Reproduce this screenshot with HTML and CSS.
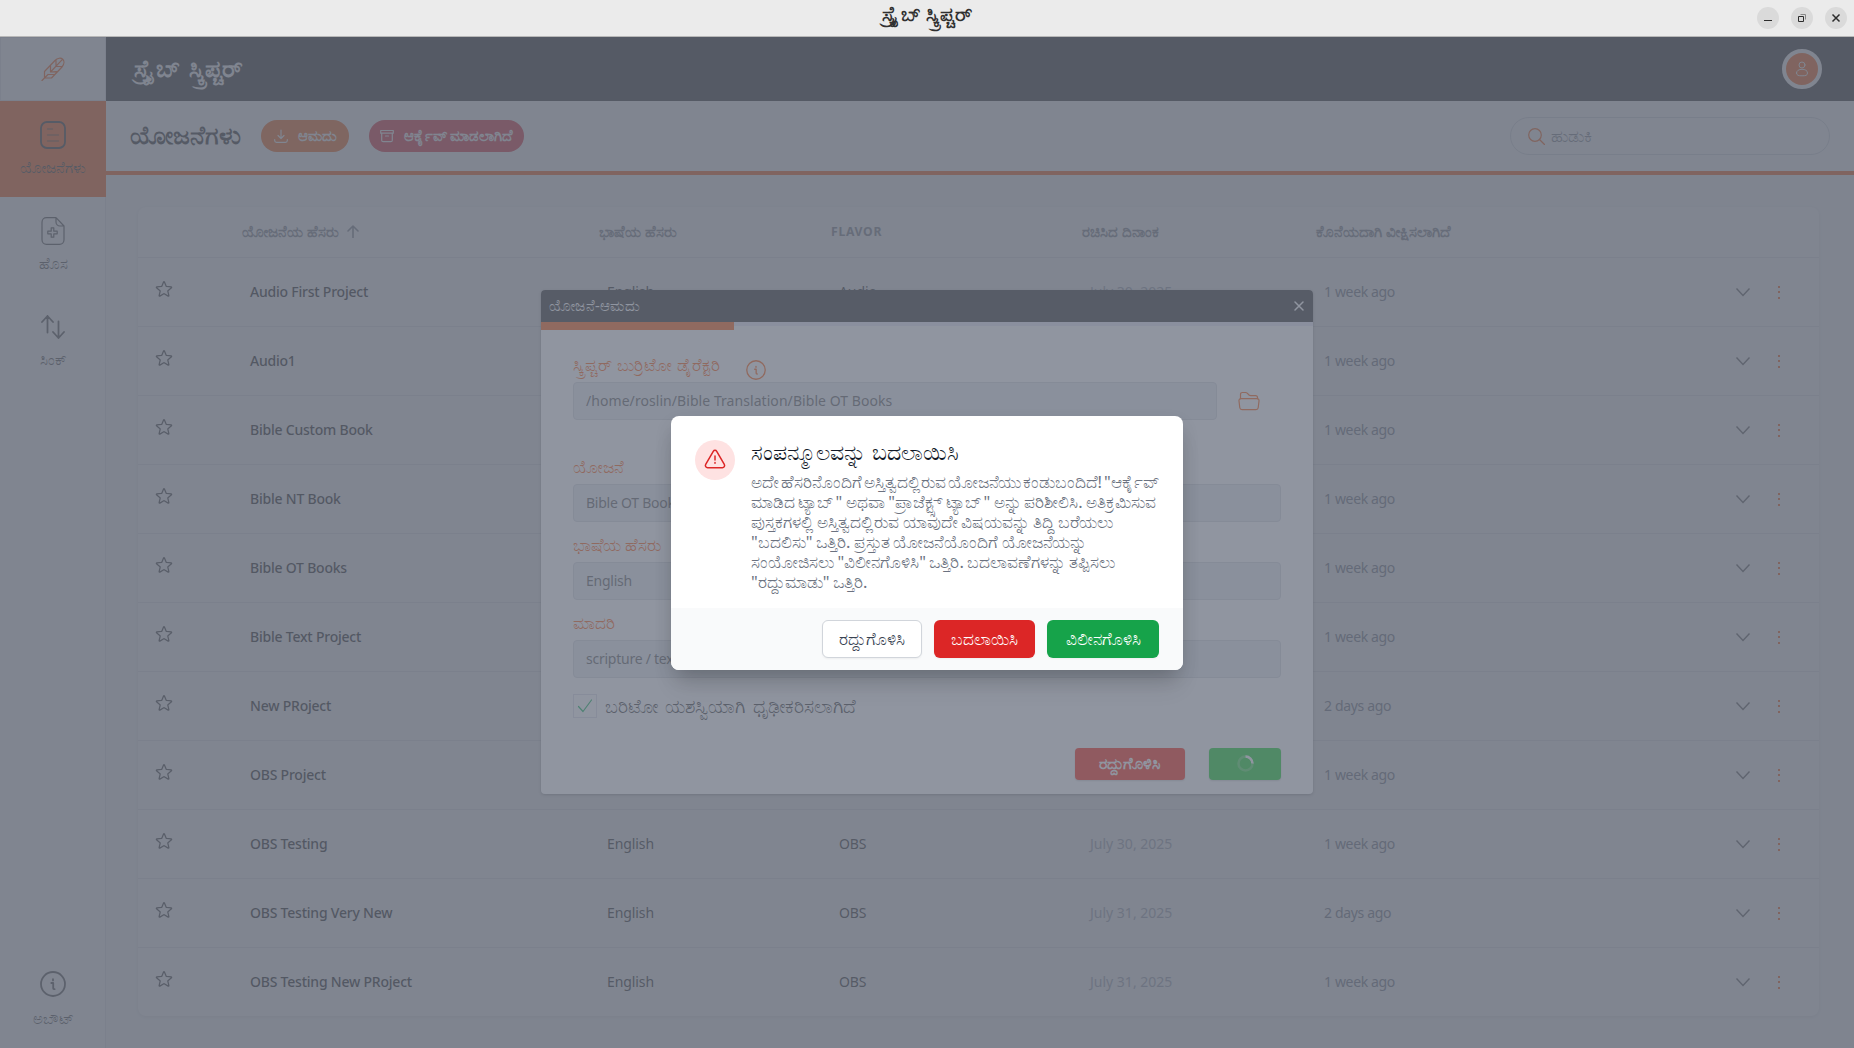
FILE: index.html
```html
<!DOCTYPE html>
<html lang="kn">
<head>
<meta charset="utf-8">
<title>ಸ್ಕ್ರೈಬ್ ಸ್ಕ್ರಿಪ್ಚರ್</title>
<link rel="stylesheet" href="styles.css">
</head>
<body>
<svg width="0" height="0" class="defs">
  <symbol id="star" viewBox="0 0 24 24"><path d="M11.48 3.5a.56.56 0 0 1 1.04 0l2.12 5.11a.56.56 0 0 0 .48.35l5.52.44c.5.04.7.66.32.99l-4.2 3.6a.56.56 0 0 0-.19.56l1.29 5.38a.56.56 0 0 1-.84.61l-4.73-2.88a.56.56 0 0 0-.58 0l-4.73 2.88a.56.56 0 0 1-.84-.61l1.29-5.38a.56.56 0 0 0-.19-.56l-4.2-3.6a.56.56 0 0 1 .32-.99l5.52-.44a.56.56 0 0 0 .48-.35z"/></symbol>
  <symbol id="chev" viewBox="0 0 20 20"><path d="M3.500 6.500 10 13.500l6.500-7"/></symbol>
  <symbol id="dots" viewBox="0 0 20 20"><path d="M9 4h2v2H9zM9 9h2v2H9zM9 15h2v2H9z"/></symbol>
  <symbol id="info" viewBox="0 0 26 26"><circle cx="13" cy="13" r="12"/><path d="M11.300 12h1.900v5.200c0 .8.4 1 1.400 1M13 8.200v1.200"/></symbol>
  <symbol id="xmark" viewBox="0 0 12 12"><path d="m2 2 8 8M10 2l-8 8"/></symbol>
</svg>

<div class="titlebar">
  <span class="win-title">ಸ್ಕ್ರೈಬ್ ಸ್ಕ್ರಿಪ್ಚರ್</span>
  <div class="win-controls">
    <span class="win-btn"><svg viewBox="0 0 22 22"><path d="M7 13.500h8"/></svg></span>
    <span class="win-btn"><svg viewBox="0 0 22 22"><path d="M7.500 9.500h5v5h-5z"/><path class="faint" d="M9.500 7.500h5v5"/></svg></span>
    <span class="win-btn"><svg viewBox="0 0 22 22"><path stroke-width="1.500" d="m7.500 7.500 7 7M14.500 7.500l-7 7"/></svg></span>
  </div>
</div>

<div class="app">
  <nav class="sidebar">
    <div class="logo"><svg class="line" width="24" height="24" viewBox="0 0 24 24"><path d="M1 23.500 7 17.500M3.500 21V14.500L14 3.500C16.500.8 20 .6 21.700 2.200S23.500 7 21 10L10.500 21H3.500M9.500 8.500V15L21.700 2.200M15 3v6M7 17.500h6.500M9.500 15l6-.3M15 9.500h6"/></svg></div>
    <a class="nav on"><svg class="line bold" width="26" height="28" viewBox="0 0 26 28"><rect x="1" y="1" width="24" height="26" rx="6"/><path class="thin" d="M7.500 8h5M7.500 14h11M7.500 20h11"/></svg><span>ಯೋಜನೆಗಳು</span></a>
    <a class="nav"><svg class="line" width="24" height="28" viewBox="0 0 24 28"><path d="M15 .7H5.500A4.500 4.500 0 0 0 1 5.200v17.600a4.500 4.500 0 0 0 4.500 4.500h13a4.500 4.500 0 0 0 4.500-4.500V9zM15 .7V5a4 4 0 0 0 4 4h4"/><path d="M10.200 10.800h2.600v3.400h3.400v2.600h-3.400v3.400h-2.600v-3.400H6.800v-2.600h3.400z"/></svg><span>ಹೊಸ</span></a>
    <a class="nav"><svg class="line bold" width="24" height="26" viewBox="0 0 24 26"><path d="M6.500 18.500V2M1 8l5.500-6L12 8M17.500 7.500V24M12 18l5.500 6 5.500-6"/></svg><span>ಸಿಂಕ್</span></a>
    <a class="nav last"><svg class="line bold" width="26" height="26"><use href="#info"/></svg><span>ಅಬೌಟ್</span></a>
  </nav>

  <main class="main">
    <header class="top"><h1>ಸ್ಕ್ರೈಬ್ ಸ್ಕ್ರಿಪ್ಚರ್</h1>
      <div class="avatar"><svg class="line" width="14" height="16" viewBox="0 0 14 16"><circle cx="7" cy="4" r="3"/><path d="M1.500 12c0-2.500 2.500-3.700 5.500-3.700s5.500 1.200 5.500 3.700-2 2.800-5.500 2.800-5.500-.3-5.500-2.800z"/></svg></div>
    </header>
    <div class="toolbar">
      <h2>ಯೋಜನೆಗಳು</h2>
      <button class="pill import"><svg class="line" width="14" height="14" viewBox="0 0 14 14"><path d="M7 1v8M4 6.500 7 9.500l3-3M.7 10.500v1q0 1.800 1.800 1.800h9q1.800 0 1.800-1.800v-1"/></svg><span>ಆಮದು</span></button>
      <button class="pill archive"><svg class="line" width="14" height="14" viewBox="0 0 14 14"><path d="M.7 1.500h12.600v2.700H.7zM1.700 4.200v7q0 1.500 1.500 1.500h7.600q1.500 0 1.500-1.500v-7M5.500 7h3"/></svg><span>ಆರ್ಕೈವ್ ಮಾಡಲಾಗಿದೆ</span></button>
      <div class="search"><svg class="line" width="17" height="17" viewBox="0 0 17 17"><circle cx="7" cy="7" r="6.300"/><path d="m11.500 11.500 5 5"/></svg><span>ಹುಡುಕಿ</span></div>
    </div>
    <div class="content">
      <div class="table">
        <div class="row head"><span></span><span class="sort"><b>ಯೋಜನೆಯ ಹೆಸರು</b><svg class="line" width="12" height="13" viewBox="0 0 12 13"><path d="M6 12.500V1M1 6l5-5 5 5"/></svg></span><span>ಭಾಷೆಯ ಹೆಸರು</span><span class="flav">FLAVOR</span><span>ರಚಿಸಿದ ದಿನಾಂಕ</span><span class="viewed">ಕೊನೆಯದಾಗಿ ವೀಕ್ಷಿಸಲಾಗಿದೆ</span></div>
        <div class="row"><svg class="star"><use href="#star"/></svg><span class="name">Audio First Project</span><span class="lang">English</span><span class="lang">Audio</span><span class="date">July 30, 2025</span><span class="ago">1 week ago</span><svg class="chev"><use href="#chev"/></svg><svg class="dots"><use href="#dots"/></svg></div>
        <div class="row"><svg class="star"><use href="#star"/></svg><span class="name">Audio1</span><span></span><span></span><span></span><span class="ago">1 week ago</span><svg class="chev"><use href="#chev"/></svg><svg class="dots"><use href="#dots"/></svg></div>
        <div class="row"><svg class="star"><use href="#star"/></svg><span class="name">Bible Custom Book</span><span></span><span></span><span></span><span class="ago">1 week ago</span><svg class="chev"><use href="#chev"/></svg><svg class="dots"><use href="#dots"/></svg></div>
        <div class="row"><svg class="star"><use href="#star"/></svg><span class="name">Bible NT Book</span><span></span><span></span><span></span><span class="ago">1 week ago</span><svg class="chev"><use href="#chev"/></svg><svg class="dots"><use href="#dots"/></svg></div>
        <div class="row"><svg class="star"><use href="#star"/></svg><span class="name">Bible OT Books</span><span></span><span></span><span></span><span class="ago">1 week ago</span><svg class="chev"><use href="#chev"/></svg><svg class="dots"><use href="#dots"/></svg></div>
        <div class="row"><svg class="star"><use href="#star"/></svg><span class="name">Bible Text Project</span><span></span><span></span><span></span><span class="ago">1 week ago</span><svg class="chev"><use href="#chev"/></svg><svg class="dots"><use href="#dots"/></svg></div>
        <div class="row"><svg class="star"><use href="#star"/></svg><span class="name">New PRoject</span><span></span><span></span><span></span><span class="ago">2 days ago</span><svg class="chev"><use href="#chev"/></svg><svg class="dots"><use href="#dots"/></svg></div>
        <div class="row"><svg class="star"><use href="#star"/></svg><span class="name">OBS Project</span><span></span><span></span><span></span><span class="ago">1 week ago</span><svg class="chev"><use href="#chev"/></svg><svg class="dots"><use href="#dots"/></svg></div>
        <div class="row"><svg class="star"><use href="#star"/></svg><span class="name">OBS Testing</span><span class="lang">English</span><span class="lang">OBS</span><span class="date">July 30, 2025</span><span class="ago">1 week ago</span><svg class="chev"><use href="#chev"/></svg><svg class="dots"><use href="#dots"/></svg></div>
        <div class="row"><svg class="star"><use href="#star"/></svg><span class="name">OBS Testing Very New</span><span class="lang">English</span><span class="lang">OBS</span><span class="date">July 31, 2025</span><span class="ago">2 days ago</span><svg class="chev"><use href="#chev"/></svg><svg class="dots"><use href="#dots"/></svg></div>
        <div class="row"><svg class="star"><use href="#star"/></svg><span class="name">OBS Testing New PRoject</span><span class="lang">English</span><span class="lang">OBS</span><span class="date">July 31, 2025</span><span class="ago">1 week ago</span><svg class="chev"><use href="#chev"/></svg><svg class="dots"><use href="#dots"/></svg></div>
      </div>
    </div>
  </main>
</div>

<div class="layer shade">
  <section class="modal">
    <div class="modal-head"><span>ಯೋಜನೆ-ಆಮದು</span><svg class="line" width="12" height="12"><use href="#xmark"/></svg></div>
    <div class="progress"><i></i></div>
    <div class="form">
      <label class="first"><span>ಸ್ಕ್ರಿಪ್ಚರ್ ಬುರ್ರಿಟೋ ಡೈರೆಕ್ಟರಿ</span><svg class="line" width="20" height="20"><use href="#info"/></svg></label>
      <div class="pick"><div class="input path">/home/roslin/Bible Translation/Bible OT Books</div><svg class="line" width="22" height="20" viewBox="0 0 22 20"><path d="M2.500 8V3.500Q2.500 1.500 4.500 1.500H7.500Q8.500 1.500 9.200 2.200L11 4Q11.700 4.600 12.700 4.600H17.500Q19.500 4.600 19.500 6.500V8M3 7.700H19Q21.300 7.700 21 10L20.200 16.800Q20 18.700 18 18.700H4Q2 18.700 1.800 16.800L1 10Q.7 7.700 3 7.700Z"/></svg></div>
      <label class="proj"><span>ಯೋಜನೆ</span></label>
      <div class="input">Bible OT Books</div>
      <label><span>ಭಾಷೆಯ ಹೆಸರು</span></label>
      <div class="input">English</div>
      <label><span>ಮಾದರಿ</span></label>
      <div class="input">scripture / textTranslation</div>
      <div class="valid"><i><svg class="line" width="18" height="18" viewBox="0 0 18 18"><path d="m2.500 9.500 4.500 5L15.500 3"/></svg></i><span>ಬರಿಟೋ ಯಶಸ್ವಿಯಾಗಿ ಧೃಢೀಕರಿಸಲಾಗಿದೆ</span></div>
      <div class="actions"><button class="cancel">ರದ್ದುಗೊಳಿಸಿ</button><button class="go"><svg width="17" height="17" viewBox="0 0 17 17"><circle cx="8.500" cy="8.500" r="7"/><path d="M8.500 1.500a7 7 0 0 1 7 7"/></svg></button></div>
    </div>
  </section>
</div>

<div class="layer veil">
  <section class="alert">
    <div class="alert-body">
      <div class="badge"><svg class="line" width="24" height="24" viewBox="0 0 24 24"><path d="M12 9v4m0 2.500v.8M10.270 4.300 2.700 17.400c-.88 1.500.2 3.350 1.940 3.350h14.720c1.730 0 2.810-1.870 1.940-3.350L13.730 4.300a2 2 0 0 0-3.460 0z"/></svg></div>
      <div class="msg">
        <h3>ಸಂಪನ್ಮೂಲವನ್ನು ಬದಲಾಯಿಸಿ</h3>
        <p><span class="tight">ಅದೇ ಹೆಸರಿನೊಂದಿಗೆ ಅಸ್ತಿತ್ವದಲ್ಲಿರುವ ಯೋಜನೆಯು ಕಂಡುಬಂದಿದೆ! "ಆರ್ಕೈವ್</span><br>ಮಾಡಿದ ಟ್ಯಾಬ್" ಅಥವಾ "ಪ್ರಾಜೆಕ್ಟ್ಸ್ ಟ್ಯಾಬ್" ಅನ್ನು ಪರಿಶೀಲಿಸಿ. ಅತಿಕ್ರಮಿಸುವ<br>ಪುಸ್ತಕಗಳಲ್ಲಿ ಅಸ್ತಿತ್ವದಲ್ಲಿರುವ ಯಾವುದೇ ವಿಷಯವನ್ನು ತಿದ್ದಿ ಬರೆಯಲು<br>"ಬದಲಿಸು" ಒತ್ತಿರಿ. ಪ್ರಸ್ತುತ ಯೋಜನೆಯೊಂದಿಗೆ ಯೋಜನೆಯನ್ನು<br>ಸಂಯೋಜಿಸಲು "ವಿಲೀನಗೊಳಿಸಿ" ಒತ್ತಿರಿ. ಬದಲಾವಣೆಗಳನ್ನು ತಪ್ಪಿಸಲು<br>"ರದ್ದುಮಾಡು" ಒತ್ತಿರಿ.</p>
      </div>
    </div>
    <div class="alert-foot"><button class="b-cancel">ರದ್ದುಗೊಳಿಸಿ</button><button class="b-replace">ಬದಲಾಯಿಸಿ</button><button class="b-merge">ವಿಲೀನಗೊಳಿಸಿ</button></div>
  </section>
</div>
</body>
</html>
```
FILE: styles.css
```css
* { box-sizing: border-box; }
body { margin: 0; width: 1854px; height: 1048px; overflow: hidden; background: #fff; font: 14px/20px "Noto Sans", "Open Sans", sans-serif; color: #333; }
h1, h2, h3, p { margin: 0; }
button { font: inherit; border: 0; padding: 0; white-space: nowrap; }
span, label { white-space: nowrap; }
.defs { position: absolute; }
.line { fill: none; stroke: currentColor; stroke-width: 1.2; stroke-linecap: round; stroke-linejoin: round; flex: none; }
.line.bold { stroke-width: 1.8; }
.thin { stroke-width: 1.4; }

.titlebar { display: grid; grid-template-columns: 1fr auto 1fr; align-items: center; height: 37px; background: #ebebeb; border-bottom: 1px solid #b8b8b8; }
.win-title { grid-column: 2; font-weight: 700; font-size: 19.8px; color: #303030; padding-bottom: 8px; }
.win-controls { display: flex; justify-content: flex-end; gap: 12px; padding-right: 7px; }
.win-btn { width: 22px; height: 22px; border-radius: 50%; background: #dadada; }
.win-btn svg { display: block; fill: none; stroke: #2c2c2c; stroke-width: 1; }
.faint { stroke: #888; }

.app { display: flex; height: 1011px; }
.sidebar { display: flex; flex-direction: column; width: 106px; border-right: 1px solid #e5e7eb; }
.logo { display: grid; place-items: center; height: 64px; color: #f50; border: 1px solid #e5e7eb; border-width: 1px 0 1px 1px; }
.nav { display: flex; flex-direction: column; align-items: center; height: 96px; width: 106px; padding-top: 20px; font-size: 15.4px; color: #444; }
.nav svg { height: 28px; }
.nav span { margin-top: 9px; }
.nav.on { background: #f50; color: #222; }
.nav.on .thin { stroke: #222; opacity: .5; }
.nav.last { margin-top: auto; padding-top: 18px; }
.nav.last span { margin-top: 11px; }

.main { flex: 1; display: flex; flex-direction: column; }
.top { flex: none; display: flex; align-items: center; justify-content: space-between; height: 64px; background: #1f1f1f; padding: 0 32px 0 28px; }
.top h1 { font-size: 24.3px; line-height: 28px; padding-bottom: 3px; color: #fff; word-spacing: 3px; }
.avatar { display: grid; place-items: center; width: 40px; height: 40px; border: 4px solid #fff; border-radius: 50%; background: #f50; color: #fff; }
.avatar svg { stroke-width: 1; }
.toolbar { flex: none; display: flex; align-items: center; height: 74px; border-bottom: 4px solid #f50; padding: 0 24px; }
.toolbar h2 { font-size: 25px; line-height: 28px; width: 131px; padding-bottom: 4px; color: #1f1f1f; white-space: nowrap; }
.pill { display: flex; align-items: center; justify-content: center; gap: 10px; height: 32px; border-radius: 16px; color: #fff; font-size: 14.8px; font-weight: 700; word-spacing: -2px; }
.pill span { padding-bottom: 2px; }
.import { width: 88px; background: #f95a06; }
.archive { width: 155px; margin-left: 20px; background: #df1c2e; }
.search { display: flex; align-items: center; gap: 6px; width: 320px; height: 38px; margin-left: auto; padding-left: 17px; border: 1px solid #d6dae0; border-radius: 19px; color: #f50; }
.search span { color: #777c85; font-size: 17.3px; padding-bottom: 1px; }

.content { flex: none; height: 873px; background: #fafbfc; padding: 32px 35px 31px 32px; }
.table { background: #fff; border-radius: 8px; box-shadow: 0 1px 4px #0000001c; }
.row { display: grid; grid-template-columns: 112px 357px 232px 251px 234px 409px 36px 1fr; align-items: center; height: 69px; border-bottom: 1px solid #e5e7eb; }
.row:last-child { border: 0; height: 68px; }
.head { height: 51px; font-size: 14.6px; font-weight: 700; color: #777c85; }
.head > span { margin-left: -8px; padding-bottom: 2px; }
.sort { display: flex; align-items: center; gap: 8px; }
.sort svg { stroke-width: 1.6; }
.head .viewed { font-size: 15px; }
.head .flav { letter-spacing: .7px; font-size: 12.2px; padding: 0; }
.star { width: 20px; height: 20px; margin: -6px 0 0 16px; fill: none; stroke: #333; stroke-width: 1.5; }
.name { font-weight: 500; color: #111; letter-spacing: -.22px; }
.lang { color: #222; letter-spacing: -.1px; }
.date { color: #9ca3af; }
.ago { color: #6b7280; letter-spacing: -.35px; }
.chev { width: 20px; height: 20px; fill: none; stroke: #555; stroke-width: 1.4; }
.dots { width: 20px; height: 20px; fill: #f50; }

.layer { position: absolute; inset: 37px 0 0; }
.shade { background: #00000040; padding: 253px 0 0 541px; }
.modal { width: 772px; height: 504px; border-radius: 4px; background: #fff; box-shadow: 0 1px 3px #0005; overflow: hidden; }
.modal-head { display: flex; justify-content: space-between; align-items: center; height: 32px; padding: 0 8px; background: #1f1f1f; color: #fff; font-size: 14.8px; letter-spacing: .3px; }
.modal-head span { padding-bottom: 2px; }
.modal-head svg { stroke-width: 1.5; }
.progress { height: 8px; background: linear-gradient(#e5e7f5 50%, #fff 50%); }
.progress i { display: block; width: 193px; height: 8px; background: #f50; }
.form { height: 464px; padding: 26px 32px 0; }
.form label { display: flex; align-items: center; height: 20px; margin: 14px 0 6px; color: #f50; font-size: 16.8px; }
.form label span { padding-bottom: 3px; }
.form label.first { margin: 0 0 6px; gap: 26px; }
.form label.first svg { margin-top: 8px; stroke-width: 1.7; }
.form label.proj { margin-top: 38px; }
.input { height: 38px; padding: 8px 12px; border: 1px solid #d1d5db; border-radius: 4px; background: #e5ebf0; color: #555; letter-spacing: -.25px; white-space: nowrap; }
.pick { display: flex; align-items: center; gap: 21px; color: #f50; }
.path { width: 644px; letter-spacing: .06px; }
.valid { display: flex; align-items: center; gap: 8px; height: 24px; margin-top: 16px; color: #333; font-size: 19.1px; word-spacing: 2.5px; }
.valid span { padding-bottom: 1px; }
.valid i { display: grid; place-items: center; width: 24px; height: 24px; border: 1px solid #d9dbe8; color: #00b050; }
.actions { display: flex; justify-content: flex-end; gap: 24px; margin-top: 30px; }
.actions button { height: 32px; padding-bottom: 2px; border-radius: 4px; color: #fff; font-size: 15.6px; font-weight: 700; box-shadow: 0 1px 2px #0003; }
.cancel { width: 110px; background: #ff1500; }
.go { display: grid; place-items: center; width: 72px; background: #00d018; }
.go svg { fill: none; stroke: #fff; stroke-width: 2.5; }
.go circle { opacity: .25; }

.veil { background: #6b7280bf; padding: 379px 0 0 671px; }
.alert { width: 512px; height: 254px; border-radius: 8px; background: #fff; box-shadow: 0 20px 25px -5px #0000001a, 0 8px 20px -4px #00000030; overflow: hidden; }
.alert-body { display: flex; gap: 16px; height: 192px; padding: 24px; }
.badge { display: grid; place-items: center; flex: none; width: 40px; height: 40px; border-radius: 50%; background: #fee2e2; color: #dc2626; }
.badge svg { stroke-width: 1.5; margin-top: -3px; }
.msg h3 { height: 24px; font-size: 22px; line-height: 22px; font-weight: 500; color: #111827; white-space: nowrap; }
.msg p { margin-top: 8px; color: #6b7280; font-size: 16.5px; word-spacing: -.8px; white-space: nowrap; }
.tight { word-spacing: -2.4px; }
.alert-foot { display: flex; justify-content: flex-end; gap: 12px; height: 62px; padding: 12px 24px; background: #f9fafb; }
.alert-foot button { height: 38px; border-radius: 6px; color: #fff; font-size: 16.9px; font-weight: 500; box-shadow: 0 1px 2px #0000000d; }
.alert-foot .b-cancel { width: 100px; background: #fff; border: 1px solid #d1d5db; color: #374151; }
.b-replace { width: 101px; background: #dc2626; }
.b-merge { width: 112px; background: #16a34a; }
```
